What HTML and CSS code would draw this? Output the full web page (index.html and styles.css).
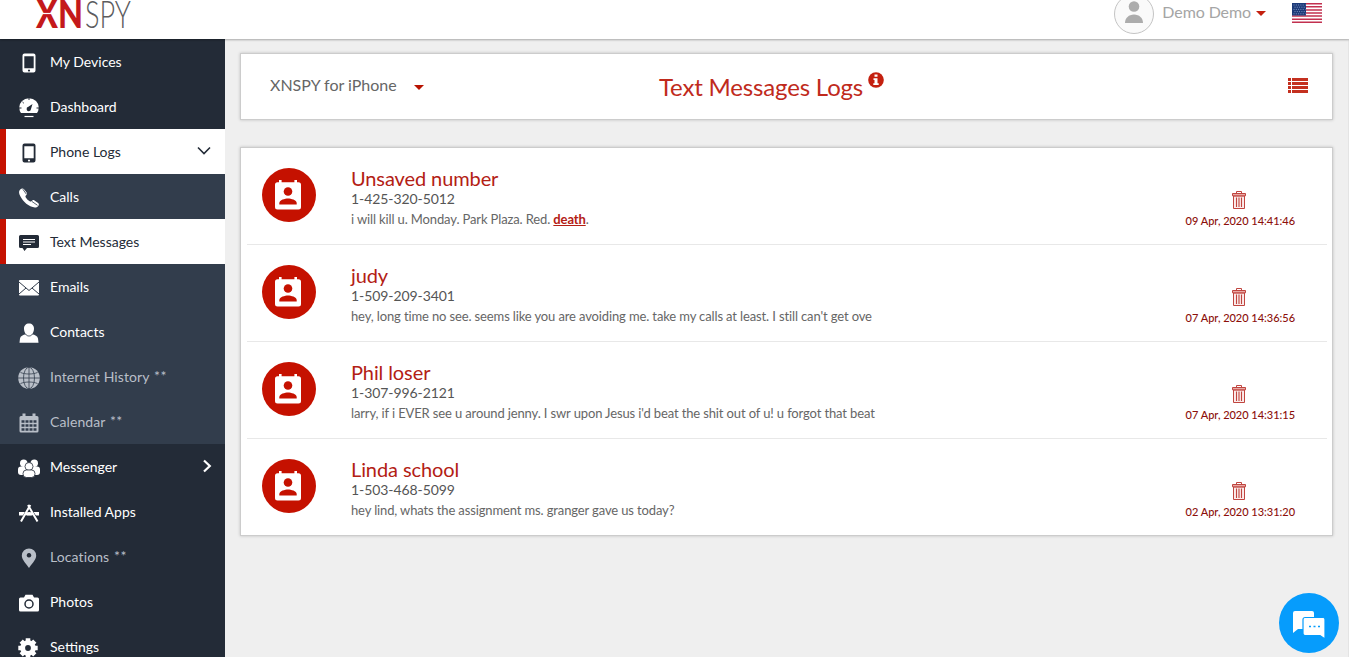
FILE: index.html
```html
<!DOCTYPE html>
<html lang="en">
<head>
  <meta charset="UTF-8" />
  <title>Text Messages Logs</title>
  <link rel="stylesheet" href="styles.css">
</head>
<body>

  <!-- Shared icons -->
  <svg class="icon-defs" width="0" height="0">
    <symbol id="icon-phone" viewBox="0 0 14 20">
      <path fill-rule="evenodd" d="M2.5 0.5h9a2 2 0 0 1 2 2v15a2 2 0 0 1-2 2h-9a2 2 0 0 1-2-2v-15a2 2 0 0 1 2-2zM2.3 3.2v12h9.4v-12zM7 16.4a1.1 1.1 0 1 0 .01 0z" />
    </symbol>
    <symbol id="icon-contact" viewBox="0 0 26 30">
      <path fill="#fff" d="M4 0h2.6v2.2h12.8V0H22v2.2h1.5A2.5 2.5 0 0 1 26 4.7v22.300a2.500 2.500 0 0 1-2.500 2.500h-21A2.500 2.500 0 0 1 0 27V4.700A2.500 2.500 0 0 1 2.500 2.200H4z" />
      <circle cx="13" cy="11.500" r="4.300" fill="#c51100" />
      <path fill="#c51100" d="M4.300 24.500v-1.600c0-2.900 5.800-4.400 8.700-4.400s8.700 1.500 8.700 4.400v1.600z" />
    </symbol>
    <symbol id="icon-trash" viewBox="0 0 14 18">
      <path d="M1.500 5h11v12.500h-11z" fill="#fbeceb" stroke="#c0453f" />
      <path d="M.5 2.500h13v2.300H.500z" fill="#e9a9a5" stroke="#c0453f" />
      <path d="M4.500 2.200V.5h5v1.700" fill="none" stroke="#c0453f" />
      <path d="M4.500 6.500v9.500M7 6.500v9.500M9.500 6.500v9.500" stroke="#c0453f" stroke-width="1.100" />
    </symbol>
  </svg>

  <div class="header">
    <svg class="logo" width="100" height="30" viewBox="0 0 100 30">
      <text class="logo-bold" x="1" y="28" textLength="47" lengthAdjust="spacingAndGlyphs">XN</text>
      <path d="M7 13.500h12" stroke="#fff" stroke-width="1.200" />
      <text class="logo-thin" x="50" y="28" textLength="46" lengthAdjust="spacingAndGlyphs">SPY</text>
    </svg>
    <div class="user">
      <div class="avatar">
        <svg width="20" height="24" viewBox="0 0 20 24" fill="#acacac">
          <circle cx="10" cy="6.500" r="5.300" />
          <path d="M1 23c0-5 3.800-8.500 9-8.500s9 3.500 9 8.500z" />
        </svg>
      </div>
      <span class="user-name">Demo Demo</span>
      <span class="caret"></span>
      <svg class="flag" width="30" height="20" viewBox="0 0 30 20">
        <rect width="30" height="20" fill="#fff" />
        <path d="M0 .77h30M0 3.850h30M0 6.930h30M0 10h30M0 13.080h30M0 16.150h30M0 19.230h30" stroke="#c2304f" stroke-width="1.540" />
        <rect width="14" height="12.500" fill="#1d3a78" />
        <path d="M1.500 2h12M2.500 4.200h11M1.500 6.400h12M2.500 8.600h11M1.500 10.800h12" stroke="#7f96c4" stroke-width="1" stroke-dasharray="1 1.300" />
      </svg>
    </div>
  </div>

  <div class="page">
    <div class="sidebar">
      <a class="item">
        <svg class="icon" width="14" height="20"><use href="#icon-phone" /></svg>
        <span>My Devices</span>
      </a>
      <a class="item">
        <svg class="icon" width="20" height="20" viewBox="0 0 20 20">
          <path d="M2 15A9.500 9.500 0 0 1 3 3a10 10 0 0 1 14 0 9.500 9.500 0 0 1 1 12z" />
          <path d="M5.500 18.500h9" stroke="currentColor" stroke-width="1.200" />
          <path class="cut" d="M10 0v2M3.500 4l1.300 1.200M0 10h2.500M17.500 10H20" />
          <path fill="#232b37" d="M13.500 6l-1.500 5a2.200 2.200 0 1 1-2.600-2.200z" />
        </svg>
        <span>Dashboard</span>
      </a>
      <a class="item active">
        <svg class="icon" width="14" height="20"><use href="#icon-phone" /></svg>
        <span>Phone Logs</span>
        <svg class="arrow" width="14" height="10" viewBox="0 0 14 10"><path d="M1 1.500l6 6 6-6" /></svg>
      </a>

      <div class="submenu">
        <a class="item">
          <svg class="icon" width="20" height="20" viewBox="0 0 20 20">
            <path d="M1.200 1.600C2.500.3 4 .2 5 1.200l2.600 3.300c.6 1 .4 2-.5 2.800-.8.700-.8 1.200-.3 2.100 1 1.500 2.300 2.900 3.900 3.900.9.500 1.500.4 2.100-.4.700-.9 1.700-1.100 2.700-.5l3.600 2.500c1.100.9 1 2.100.1 3.100-1.400 1.600-3.300 1.900-5.500 1.100C7.500 17 2.600 11.900.4 6.200-.2 4.400 0 2.800 1.200 1.600z" />
            <path class="cut sub thin" d="M3.800 1.200l3.600 5M13 13.500l5.500 3.800" />
          </svg>
          <span>Calls</span>
        </a>
        <a class="item active">
          <svg class="icon" width="20" height="18" viewBox="0 0 20 18">
            <path d="M1.500 1h17a1.500 1.500 0 0 1 1.500 1.500v10a1.500 1.500 0 0 1-1.500 1.500H8l-2.500 3-2-3h-2A1.500 1.500 0 0 1 0 12.500v-10A1.500 1.500 0 0 1 1.500 1z" />
            <path d="M4 5.500h12M4 8h12M4 10.500h8" stroke="#fff" stroke-width="1" />
          </svg>
          <span>Text Messages</span>
        </a>
        <a class="item">
          <svg class="icon" width="20" height="16" viewBox="0 0 20 16">
            <rect width="20" height="15.500" rx="1" />
            <path class="cut sub" d="M0 2l10 8.500L20 2M0 14l7-6M20 14l-7-6" />
          </svg>
          <span>Emails</span>
        </a>
        <a class="item">
          <svg class="icon" width="20" height="20" viewBox="0 0 20 20">
            <path d="M10 .5c3 0 5 2 5 5.200 0 2-.8 4.300-2 5.500 3 .8 5.500 1.500 6 4.300l.5 4.200H.5L1 15.500c.500-2.800 3-3.500 6-4.300-1.200-1.200-2-3.500-2-5.500C5 2.500 7 .5 10 .5z" />
            <path class="cut sub thin" d="M6.500 11c1 1.500 2 2 3.500 2s2.500-.500 3.500-2" />
          </svg>
          <span>Contacts</span>
        </a>
        <a class="item disabled">
          <svg class="icon" width="22" height="22" viewBox="0 0 22 22">
            <circle cx="11" cy="11" r="10.800" />
            <g class="cut sub thin">
              <path d="M0 11h22M11 0v22M2.500 5.500c5 2 12 2 17 0M2.500 16.500c5-2 12-2 17 0" />
              <ellipse cx="11" cy="11" rx="5.500" ry="10.800" />
            </g>
          </svg>
          <span>Internet History <sup>**</sup></span>
        </a>
        <a class="item disabled">
          <svg class="icon" width="19" height="20" viewBox="0 0 19 20">
            <path d="M3 .5h3V3h7V.5h3V3h1.500A1.500 1.500 0 0 1 19 4.500v13.500a1.500 1.500 0 0 1-1.500 1.500h-16A1.500 1.500 0 0 1 0 18V4.500A1.500 1.500 0 0 1 1.500 3H3z" />
            <path d="M2 8.500h15M2 12.500h15M2 16.500h15" stroke="#323d4c" stroke-width="2.700" stroke-dasharray="3 1" />
          </svg>
          <span>Calendar <sup>**</sup></span>
        </a>
      </div>

      <a class="item">
        <svg class="icon" width="22" height="19" viewBox="0 0 22 19">
          <circle cx="5.700" cy="4.200" r="3.700" />
          <circle cx="16.300" cy="4.200" r="3.700" />
          <rect x="0" y="7.500" width="10" height="8.500" rx="3" />
          <rect x="12" y="7.500" width="10" height="8.500" rx="3" />
          <circle class="cut thin" cx="11" cy="7.500" r="4" />
          <rect class="cut thin" x="5" y="11" width="12" height="7.500" rx="3.500" />
        </svg>
        <span>Messenger</span>
        <svg class="arrow right" width="10" height="14" viewBox="0 0 10 14"><path d="M2 1.500L7.800 7 2 12.500" /></svg>
      </a>
      <a class="item">
        <svg class="icon" width="20" height="18" viewBox="0 0 20 18">
          <path d="M0 8h20v3.500H0z" />
          <path d="M11.500 1.500L3 16.500M8.500 1.500L18 16.500" stroke="#232b37" stroke-width="3.400" />
          <path d="M6 9.700h8" stroke="currentColor" stroke-width="3" />
          <path d="M11.300 1L2 17.500M9 1l9.500 16.500" stroke="currentColor" stroke-width="2" />
        </svg>
        <span>Installed Apps</span>
      </a>
      <a class="item disabled">
        <svg class="icon" width="16" height="20" viewBox="0 0 16 20">
          <path fill-rule="evenodd" d="M8 .5a7.200 7.200 0 0 1 7.200 7.200C15.200 12 10 16.500 8 20 6 16.500.8 12 .8 7.700A7.200 7.200 0 0 1 8 .5zM8 5a2.300 2.300 0 1 0 .01 0z" />
        </svg>
        <span>Locations <sup>**</sup></span>
      </a>
      <a class="item">
        <svg class="icon" width="20" height="18" viewBox="0 0 20 18">
          <path d="M1.500 3.500H5L6.500.8h7L15 3.500h3.500A1.500 1.500 0 0 1 20 5v11a1.500 1.500 0 0 1-1.500 1.500h-17A1.500 1.500 0 0 1 0 16V5a1.500 1.500 0 0 1 1.500-1.500z" />
          <circle cx="10" cy="10" r="4" stroke="#232b37" stroke-width="1.500" />
        </svg>
        <span>Photos</span>
      </a>
      <a class="item">
        <svg class="icon gear" width="20" height="20" viewBox="0 0 20 20">
          <path d="M10 .3v19.400M.3 10h19.400M3.200 3.200l13.600 13.600M3.200 16.800L16.800 3.200" stroke="currentColor" stroke-width="4.600" />
          <circle cx="10" cy="10" r="7.800" />
          <circle cx="10" cy="10" r="2.900" fill="#232b37" />
        </svg>
        <span>Settings</span>
      </a>
    </div>

    <div class="content">
      <div class="card title-bar">
        <div class="device">XNSPY for iPhone <span class="caret dark"></span></div>
        <h1>Text Messages Logs
          <svg class="info" width="16" height="16" viewBox="0 0 16 16">
            <circle cx="8" cy="8" r="7.800" fill="#c4200f" />
            <path d="M6.500 2.500h3v2.300h-3zM5.500 6.200h4v5h1.200V13H5.300v-1.800h1.200V8h-1z" fill="#fff" />
          </svg>
        </h1>
        <svg class="list-icon" width="20" height="15" viewBox="0 0 20 15" fill="#c4301f">
          <path d="M0 0h3v3H0zM0 4h3v3H0zM0 8h3v3H0zM0 12h3v3H0zM4 0h16v3H4zM4 4h16v3H4zM4 8h16v3H4zM4 12h16v3H4z" />
        </svg>
      </div>

      <div class="card messages">
        <div class="message">
          <div class="badge"><svg width="26" height="30"><use href="#icon-contact" /></svg></div>
          <div class="details">
            <h2>Unsaved number</h2>
            <p class="number">1-425-320-5012</p>
            <p class="text">i will kill u. Monday. Park Plaza. Red. <a class="keyword">death</a>.</p>
          </div>
          <div class="meta">
            <svg width="14" height="18"><use href="#icon-trash" /></svg>
            <span>09 Apr, 2020 14:41:46</span>
          </div>
        </div>
        <div class="message">
          <div class="badge"><svg width="26" height="30"><use href="#icon-contact" /></svg></div>
          <div class="details">
            <h2>judy</h2>
            <p class="number">1-509-209-3401</p>
            <p class="text">hey, long time no see. seems like you are avoiding me. take my calls at least. I still can't get ove</p>
          </div>
          <div class="meta">
            <svg width="14" height="18"><use href="#icon-trash" /></svg>
            <span>07 Apr, 2020 14:36:56</span>
          </div>
        </div>
        <div class="message">
          <div class="badge"><svg width="26" height="30"><use href="#icon-contact" /></svg></div>
          <div class="details">
            <h2>Phil loser</h2>
            <p class="number">1-307-996-2121</p>
            <p class="text">larry, if i EVER see u around jenny. I swr upon Jesus i'd beat the shit out of u! u forgot that beat</p>
          </div>
          <div class="meta">
            <svg width="14" height="18"><use href="#icon-trash" /></svg>
            <span>07 Apr, 2020 14:31:15</span>
          </div>
        </div>
        <div class="message">
          <div class="badge"><svg width="26" height="30"><use href="#icon-contact" /></svg></div>
          <div class="details">
            <h2>Linda school</h2>
            <p class="number">1-503-468-5099</p>
            <p class="text">hey lind, whats the assignment ms. granger gave us today?</p>
          </div>
          <div class="meta">
            <svg width="14" height="18"><use href="#icon-trash" /></svg>
            <span>02 Apr, 2020 13:31:20</span>
          </div>
        </div>
      </div>
    </div>
  </div>

  <!-- Chat button -->
  <div class="chat">
    <svg width="32" height="28" viewBox="0 0 32 28">
      <path fill="#fff" d="M2 0h17a2 2 0 0 1 2 2v14a2 2 0 0 1-2 2H5l-5 4V2a2 2 0 0 1 2-2z" />
      <path fill="#fff" stroke="#069cfc" stroke-width="1.200" d="M12 6.500h18a2 2 0 0 1 2 2V28l-5-3.500H12a2 2 0 0 1-2-2v-14a2 2 0 0 1 2-2z" />
      <path d="M16 15.500h2M20.500 15.500h2M25 15.500h2" stroke="#069cfc" stroke-width="1.500" />
    </svg>
  </div>

</body>
</html>
```

FILE: styles.css
```css
body {
  margin: 0;
  height: 657px;
  overflow: hidden;
  display: flex;
  flex-direction: column;
  font-family: Lato, sans-serif;
  background-color: #efefef;
}

h1, h2, p {
  margin: 0;
  font-weight: 400;
}

svg {
  display: block;
  flex-shrink: 0;
}

.icon-defs {
  position: absolute;
}

/* Header */
.header {
  position: relative;
  z-index: 1;
  box-sizing: border-box;
  flex-shrink: 0;
  height: 39px;
  padding: 0 27px 11px 35px;
  display: flex;
  justify-content: space-between;
  background-color: #fff;
  box-shadow: 0 1px 2px rgba(0, 0, 0, 0.3);
}

.logo-bold {
  font-size: 40px;
  font-weight: 900;
  fill: #c4191b;
}

.logo-thin {
  font-size: 38px;
  font-weight: 300;
  fill: #5c5c5e;
}

.user {
  height: 26px;
  display: flex;
  align-items: center;
}

.avatar {
  box-sizing: border-box;
  width: 40px;
  height: 40px;
  margin-top: 2px;
  border: 1px solid #c4c4c4;
  border-radius: 50%;
  background-color: #fafafa;
  display: flex;
  justify-content: center;
  padding-top: 5px;
}

.user-name {
  margin-left: 8px;
  padding-bottom: 2px;
  font-size: 16px;
  line-height: 20px;
  letter-spacing: -0.1px;
  color: #a5a5a5;
}

.caret {
  display: inline-block;
  margin-left: 5px;
  border: 5px solid transparent;
  border-top-color: #c4200f;
  border-bottom: 0;
}

.flag {
  margin-left: 26px;
}

.page {
  flex: 1;
  min-height: 0;
  display: flex;
}

/* Sidebar */
.sidebar {
  width: 225px;
  flex-shrink: 0;
  background-color: #232b37;
}

.submenu {
  background-color: #323d4c;
}

.item {
  box-sizing: border-box;
  height: 45px;
  padding-left: 50px;
  display: flex;
  align-items: center;
  font-size: 14px;
  line-height: 17px;
  color: #fff;
  fill: currentColor;
}

.item .icon {
  width: 22px;
  margin: 3px 10px 0 -32px;
}

.item .gear {
  margin: 3px 11px 0 -33px;
}

.item.active {
  padding-left: 44px;
  border-left: 6px solid #c51100;
  background-color: #fff;
  color: #232b37;
}

.item.disabled {
  letter-spacing: 0.1px;
  color: #b9bfc8;
}

.item sup {
  margin-left: 1px;
  font-size: 14px;
  line-height: 0;
  letter-spacing: 0.5px;
  vertical-align: 1px;
}

.cut {
  stroke: #232b37;
  stroke-width: 1;
}

.cut.sub {
  fill: none;
  stroke: #323d4c;
}

.cut.thin {
  stroke-width: 0.8;
}

.arrow {
  margin-left: auto;
  margin-right: 14px;
  margin-bottom: 1px;
  fill: none;
  stroke: currentColor;
  stroke-width: 1.6;
}

.arrow.right {
  margin-right: 13px;
  stroke-width: 2.2;
}

/* Content */
.content {
  flex: 1;
  padding: 14px 15px 0;
  border-right: 1px solid #e4e4e4;
}

.card {
  box-sizing: border-box;
  border: 1px solid #ccc;
  background-color: #fff;
  box-shadow: 0 0 3px rgba(0, 0, 0, 0.2);
}

.title-bar {
  height: 67px;
  padding: 0 24px 0 30px;
  margin-bottom: 27px;
  display: grid;
  grid-template-columns: 388px 1fr auto;
  align-items: center;
}

.device {
  margin-left: -1px;
  padding-bottom: 4px;
  font-size: 16px;
  line-height: 20px;
  color: #666;
}

.caret.dark {
  margin-left: 13px;
  vertical-align: 1px;
  border-top-color: #b81200;
}

.title-bar h1 {
  display: flex;
  gap: 5px;
  font-size: 24px;
  line-height: 30px;
  letter-spacing: -0.17px;
  color: #c02a1c;
}

.list-icon {
  margin-bottom: 2px;
}

.messages {
  padding: 0 5px 0 6px;
}

.message {
  box-sizing: border-box;
  height: 97px;
  padding: 20px 32px 0 15px;
  display: flex;
  border-bottom: 1px solid #e8e8e8;
}

.message:last-child {
  height: 96px;
  border-bottom: 0;
}

.badge {
  box-sizing: border-box;
  width: 54px;
  height: 54px;
  padding: 0 2px 1px 0;
  border-radius: 50%;
  background-color: #c51100;
  display: flex;
  align-items: center;
  justify-content: center;
}

.details {
  flex: 1;
  margin-left: 35px;
}

.details h2 {
  font-size: 20px;
  line-height: 20px;
  letter-spacing: -0.1px;
  color: #b32014;
}

.number {
  font-size: 14px;
  line-height: 21px;
  letter-spacing: -0.08px;
  color: #555;
}

.text {
  font-size: 13px;
  line-height: 21px;
  letter-spacing: -0.13px;
  color: #666;
}

.keyword {
  font-weight: 700;
  text-decoration: underline;
  color: #b32014;
}

.meta {
  padding-top: 23px;
  display: flex;
  flex-direction: column;
  align-items: center;
  gap: 4px;
  font-size: 11px;
  line-height: 16px;
  font-weight: 500;
  letter-spacing: -0.02px;
  color: #8c0f0a;
}

.meta svg {
  margin-right: 2px;
}

/* Chat button */
.chat {
  box-sizing: border-box;
  position: fixed;
  right: 10px;
  bottom: 4px;
  width: 60px;
  height: 60px;
  padding-top: 3px;
  border-radius: 50%;
  background-color: #069cfc;
  display: flex;
  align-items: center;
  justify-content: center;
}
```
